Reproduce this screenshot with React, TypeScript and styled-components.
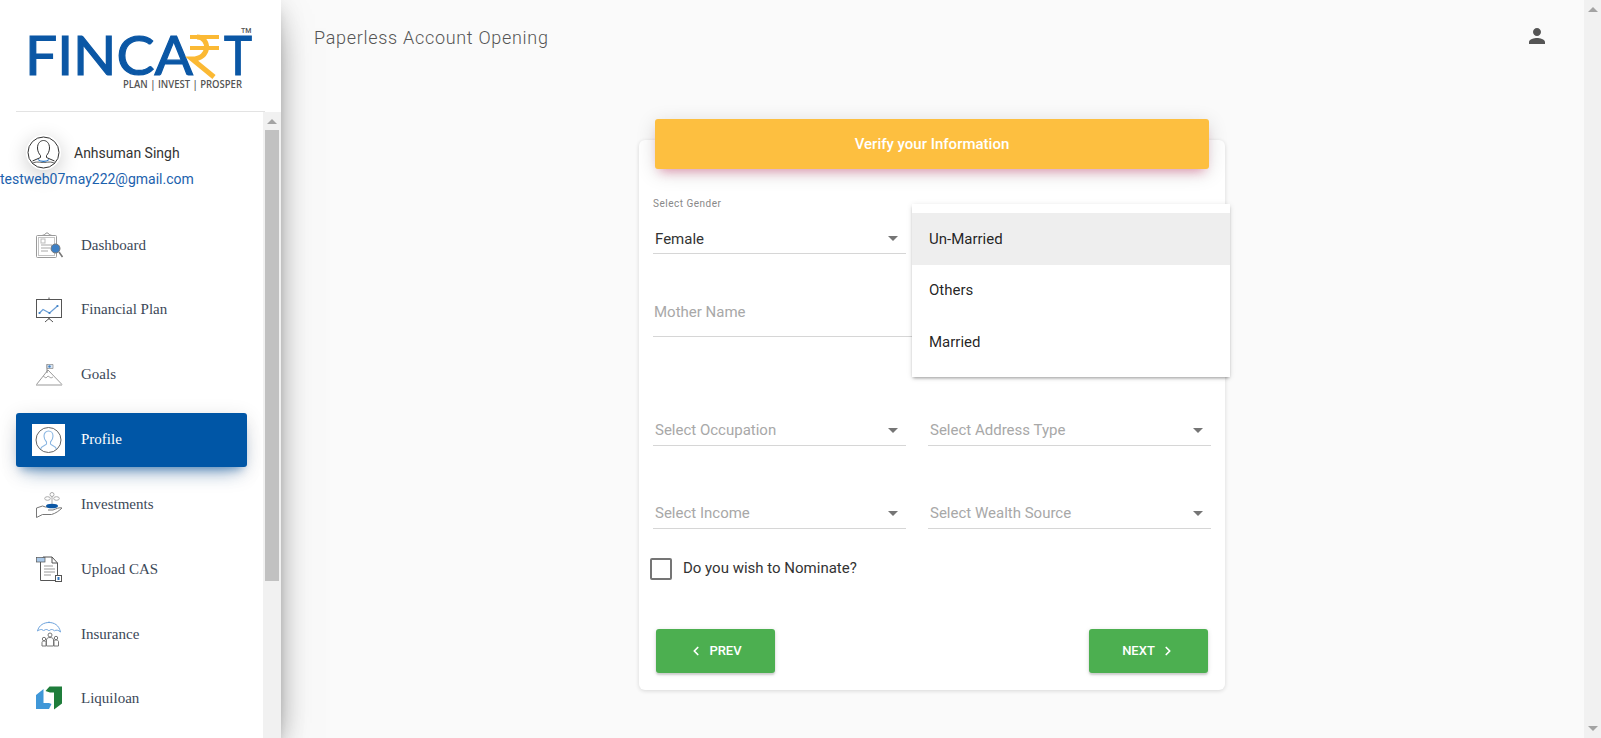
import React from 'react';
import styled, { createGlobalStyle } from 'styled-components';
import { MdPerson } from 'react-icons/md';
import { ChevronLeft, ChevronRight } from 'lucide-react';

const GlobalStyle = createGlobalStyle`
  html, body {
    margin: 0;
    padding: 0;
    height: 100%;
    overflow: hidden;
    background: #fafafa;
    font-family: Roboto, 'Liberation Sans', sans-serif;
  }
  #root { height: 100%; }
`;

const Page = styled.div`
  display: flex;
  height: 738px;
  overflow: hidden;
  background: #fafafa;
`;

const Sidebar = styled.aside`
  width: 281px;
  flex: none;
  display: flex;
  flex-direction: column;
  background: #fff;
  position: relative;
  z-index: 2;
  box-shadow: 0 16px 38px -12px rgba(0, 0, 0, 0.56), 0 4px 25px 0 rgba(0, 0, 0, 0.12),
    0 8px 10px -5px rgba(0, 0, 0, 0.2);
`;

const LogoBox = styled.div`
  height: 112px;
  margin: 0 16px;
  flex: none;
  border-bottom: 1px solid #e3e3e3;
  box-sizing: border-box;
  svg {
    display: block;
    margin-left: -16px;
  }
`;

const SideBody = styled.div`
  flex: 1;
  display: flex;
  min-height: 0;
`;

const SideContent = styled.div`
  flex: 1;
  min-width: 0;
  overflow: hidden;
  padding-top: 23px;
`;

const Track = styled.div<{ $width: number; $split?: boolean }>`
  width: ${(p) => p.$width}px;
  flex: none;
  background: #f1f1f1;
  display: flex;
  flex-direction: column;
  align-items: center;
  justify-content: ${(p) => (p.$split ? 'space-between' : 'flex-start')};
  padding-top: 7px;
  box-sizing: border-box;
`;

const ArrowUp = styled.span`
  width: 0;
  height: 0;
  flex: none;
  border-left: 5px solid transparent;
  border-right: 5px solid transparent;
  border-bottom: 5px solid #a3a3a3;
`;

const ArrowDown = styled.span`
  width: 0;
  height: 0;
  flex: none;
  margin-bottom: 7px;
  border-left: 5px solid transparent;
  border-right: 5px solid transparent;
  border-top: 5px solid #a3a3a3;
`;

const Thumb = styled.div`
  width: 14px;
  height: 451px;
  margin-top: 6px;
  background: #c1c1c1;
  flex: none;
`;

const UserRow = styled.div`
  display: flex;
  align-items: center;
  padding-left: 26px;
  gap: 13px;
`;

const Avatar = styled.div`
  width: 35px;
  height: 35px;
  border-radius: 50%;
  background: #fff;
  flex: none;
  box-shadow: 0 5px 20px rgba(0, 0, 0, 0.2);
  svg {
    display: block;
  }
`;

const UserName = styled.span`
  font-size: 14px;
  color: #333;
`;

const UserEmail = styled.div`
  font-size: 14px;
  line-height: 20px;
  margin-top: -1px;
  color: #1b61ad;
  white-space: nowrap;
`;

const NavList = styled.nav`
  display: flex;
  flex-direction: column;
  gap: 10.85px;
  margin: 29px 0 0 16px;
  width: 231px;
`;

const NavItem = styled.div<{ $active?: boolean }>`
  height: 54px;
  flex: none;
  display: flex;
  align-items: center;
  gap: 16px;
  padding-left: 16px;
  border-radius: 3px;
  font-family: 'Liberation Serif', 'Times New Roman', serif;
  font-size: 15px;
  color: ${(p) => (p.$active ? '#fff' : '#3c4858')};
  background: ${(p) => (p.$active ? '#0056a6' : 'transparent')};
  box-shadow: ${(p) =>
    p.$active
      ? '0 12px 20px -10px rgba(0,86,166,.5), 0 4px 20px 0 rgba(0,0,0,.12), 0 7px 8px -5px rgba(0,86,166,.4)'
      : 'none'};
`;

const IconBox = styled.span<{ $active?: boolean }>`
  width: 33px;
  height: 32px;
  flex: none;
  background: ${(p) => (p.$active ? '#fff' : 'transparent')};
  svg {
    display: block;
  }
`;

const Main = styled.main`
  flex: 1;
  min-width: 0;
  display: flex;
  flex-direction: column;
`;

const Header = styled.header`
  height: 74px;
  flex: none;
  display: flex;
  align-items: center;
  justify-content: space-between;
  padding: 0 35px 0 33px;
  color: #555;
  svg {
    margin-bottom: 2px;
  }
`;

const Title = styled.div`
  font-size: 18px;
  font-weight: 300;
  letter-spacing: 0.7px;
  color: #555;
`;

const Content = styled.div`
  flex: 1;
  display: flex;
  justify-content: center;
  padding: 66px 1px 0 0;
`;

const Card = styled.section`
  width: 586px;
  height: 550px;
  background: #fff;
  border-radius: 6px;
  box-shadow: 0 1px 4px 0 rgba(0, 0, 0, 0.14);
  display: flex;
  flex-direction: column;
`;

const CardHead = styled.div`
  margin: -21px 16px 0;
  height: 50px;
  flex: none;
  border-radius: 3px;
  background: #fdbf40;
  color: #fff;
  font-size: 15px;
  font-weight: 500;
  display: flex;
  align-items: center;
  justify-content: center;
  box-shadow: 0 4px 20px 0 rgba(0, 0, 0, 0.14), 0 7px 10px -5px rgba(233, 30, 99, 0.4);
`;

const FormGrid = styled.div`
  display: grid;
  grid-template-columns: 253px 283px;
  grid-template-rows: 58px 83px 109px 83px;
  column-gap: 22px;
  align-items: end;
  margin: 27px 14px 0;
`;

const FieldLabel = styled.div`
  font-size: 10px;
  line-height: 12px;
  letter-spacing: 0.5px;
  color: #888;
  margin-bottom: 13px;
`;

const SelectBox = styled.div<{ $empty?: boolean }>`
  height: 31px;
  box-sizing: border-box;
  border-bottom: 1px solid #d6d6d6;
  display: flex;
  align-items: center;
  justify-content: space-between;
  padding: ${(p) => (p.$empty ? '0' : '1px')} 8px 0 2px;
  font-size: 15px;
  color: ${(p) => (p.$empty ? '#a8a8a8' : '#333')};
`;

const Caret = styled.span`
  width: 0;
  height: 0;
  border-left: 5px solid transparent;
  border-right: 5px solid transparent;
  border-top: 5px solid #757575;
`;

const TextField = styled.div`
  grid-column: 1 / span 2;
  height: 50px;
  box-sizing: border-box;
  border-bottom: 1px solid #d6d6d6;
  display: flex;
  align-items: center;
  padding-left: 1px;
  font-size: 15px;
  color: #a8a8a8;
`;

const MenuAnchor = styled.div`
  position: relative;
  align-self: stretch;
`;

const Menu = styled.ul`
  position: absolute;
  left: -16px;
  top: 8px;
  width: 318px;
  height: 173px;
  margin: 0;
  padding: 9px 0 0;
  box-sizing: border-box;
  list-style: none;
  background: #fff;
  z-index: 5;
  box-shadow: 0 2px 3px -1px rgba(0, 0, 0, 0.35), 0 1px 6px 0 rgba(0, 0, 0, 0.1);
`;

const MenuItem = styled.li<{ $selected?: boolean }>`
  height: 51.5px;
  display: flex;
  align-items: center;
  padding-left: 17px;
  font-size: 15px;
  color: rgba(0, 0, 0, 0.87);
  background: ${(p) => (p.$selected ? '#eee' : 'transparent')};
`;

const CheckRow = styled.label`
  display: flex;
  align-items: center;
  gap: 11px;
  margin: 29px 0 0 11px;
  font-size: 15px;
  color: #333;
`;

const CheckBox = styled.span`
  width: 22px;
  height: 22px;
  flex: none;
  box-sizing: border-box;
  border: 2px solid #757575;
  border-radius: 2px;
`;

const CheckText = styled.span`
  margin-bottom: 2px;
`;

const ButtonRow = styled.div`
  display: flex;
  justify-content: space-between;
  margin: 49px 17px 0;
`;

const NavButton = styled.button`
  width: 119px;
  height: 44px;
  border: 0;
  padding: 0 0 1px;
  border-radius: 3px;
  background: #4caf50;
  color: #fff;
  font-family: inherit;
  font-size: 13px;
  font-weight: 500;
  display: flex;
  align-items: center;
  justify-content: center;
  gap: 6px;
  box-shadow: 0 2px 2px 0 rgba(0, 0, 0, 0.14), 0 1px 5px 0 rgba(0, 0, 0, 0.12);
`;

const Logo = () => (
  <svg width="265" height="109" viewBox="0 0 265 109">
    <text x="25" y="75" fontFamily="Lato, sans-serif" fontWeight="400" fontSize="54" fill="#0b57a5" stroke="#0b57a5" strokeWidth="1.200" textLength="168" lengthAdjust="spacingAndGlyphs">
      FINCA
    </text>
    <path d="M190 37h29M190 48h29" stroke="#fbb934" strokeWidth="4" fill="none" />
    <path d="M197 37c13 0 14 22-5 22l22 18" stroke="#fbb934" strokeWidth="5" fill="none" />
    <text x="224" y="75" fontFamily="Lato, sans-serif" fontWeight="400" fontSize="54" fill="#0b57a5" stroke="#0b57a5" strokeWidth="1.200" textLength="28" lengthAdjust="spacingAndGlyphs">
      T
    </text>
    <text x="241" y="33" fontFamily="Roboto, sans-serif" fontWeight="500" fontSize="7" fill="#555">
      TM
    </text>
    <text x="123" y="88" fontFamily="'Open Sans', sans-serif" fontWeight="600" fontSize="10.5" fill="#555" textLength="119" lengthAdjust="spacingAndGlyphs">
      PLAN | INVEST | PROSPER
    </text>
  </svg>
);

const AvatarIcon = () => (
  <svg width="35" height="35" viewBox="0 0 35 35" fill="none">
    <circle cx="17.5" cy="17.5" r="15.5" stroke="#333" strokeWidth="1" />
    <path d="M11.5 13c0-5 3-7.500 6-7.500s6 2.500 6 7.500c0 3-1.500 6-3 7.500v2l8 3.500M11.500 13c0 3 1.500 6 3 7.500v2l-8 3.500" stroke="#333" strokeWidth="1" />
    <path d="M12 24.500c2 2.500 9 2.500 11 0" stroke="#1b6fc4" strokeWidth="1.200" />
    <path d="M6 28.500c4-2.500 8-1 11.500-1s7.500-1.500 11.500 1" stroke="#333" strokeWidth="0.800" />
  </svg>
);

const DashboardIcon = () => (
  <svg width="33" height="32" viewBox="0 0 33 32" fill="none">
    <rect x="4.500" y="6.500" width="20" height="22" rx="1" stroke="#9a9a9a" />
    <rect x="6.500" y="8.500" width="16" height="18" stroke="#c4c4c4" />
    <path d="M10 6.500l3-1 1-1.500h2l1 1.500 3 1" stroke="#9a9a9a" />
    <path d="M9 16h11M9 19h9M9 22h7" stroke="#a8a8a8" strokeWidth="1.200" />
    <rect x="9" y="10" width="4" height="4" stroke="#bbb" />
    <circle cx="23.500" cy="19.500" r="4.500" fill="#3d7fc4" stroke="#777" />
    <path d="M27 23l3.500 5" stroke="#777" strokeWidth="1.600" />
  </svg>
);

const PlanIcon = () => (
  <svg width="33" height="32" viewBox="0 0 33 32" fill="none">
    <rect x="4.500" y="5.500" width="25" height="18" stroke="#555" />
    <path d="M17 3.500v2M17 23.500v2M13 28l4-3.500 4 3.500" stroke="#555" />
    <path d="M7.500 19l3.500-3.500 6.500 3.500 8-7" stroke="#6c9fd6" strokeWidth="1.200" />
    <circle cx="7.500" cy="19" r="1.100" fill="#3d7fc4" />
    <circle cx="17.500" cy="19" r="1.100" fill="#3d7fc4" />
    <circle cx="25.500" cy="12" r="1.100" fill="#3d7fc4" />
  </svg>
);

const GoalsIcon = () => (
  <svg width="33" height="32" viewBox="0 0 33 32" fill="none">
    <path d="M4.500 25.500L16 11l14 14.500" stroke="#9a9a9a" />
    <path d="M4 26h26" stroke="#aaa" strokeWidth="1.200" />
    <path d="M11 17l3 2 2-2 3 2 2-1" stroke="#aaa" />
    <path d="M15 5v9" stroke="#888" />
    <path d="M15 5.500h6v4h-6z" fill="#dce7f4" stroke="#888" strokeWidth="0.700" />
    <circle cx="17.500" cy="7.500" r="1.200" fill="#3d7fc4" />
  </svg>
);

const ProfileIcon = () => (
  <svg width="33" height="32" viewBox="0 0 33 32" fill="none">
    <circle cx="16.500" cy="16" r="12.500" stroke="#666" />
    <path d="M8.500 25c1-3 5-3.500 6-5v-2c-1.500-1.500-2.500-3-2.500-6 0-3 2-5 4.500-5s4.500 2 4.500 5c0 3-1 4.500-2.500 6v2c1 1.500 5 2 6 5" stroke="#8ab6e2" strokeWidth="1.100" />
  </svg>
);

const InvestIcon = () => (
  <svg width="33" height="32" viewBox="0 0 33 32" fill="none">
    <path d="M4.500 20v9.500l6-3h9c4-1 8-4 10.500-6.500-3-1-6 1-9 2h-5" stroke="#777" />
    <path d="M4.500 20l6-2 3 1h6" stroke="#777" />
    <ellipse cx="20" cy="18" rx="6" ry="2.300" fill="#0b57a5" />
    <path d="M20 16V8" stroke="#aaa" />
    <circle cx="20" cy="6.500" r="2" stroke="#aaa" />
    <ellipse cx="15.500" cy="10.500" rx="2.800" ry="1.800" stroke="#aaa" />
    <ellipse cx="24.500" cy="10.500" rx="2.800" ry="1.800" stroke="#aaa" />
  </svg>
);

const UploadIcon = () => (
  <svg width="33" height="32" viewBox="0 0 33 32" fill="none">
    <path d="M8.500 8V27.500h17V10l-5.500-6H11v2" stroke="#555" />
    <path d="M20 4v6h5.500" stroke="#555" />
    <rect x="4.500" y="4.500" width="8.500" height="4.500" fill="#a9c8e8" stroke="#555" strokeWidth="0.700" />
    <path d="M12 13h9M12 16h11M12 19h11M12 22h7" stroke="#999" />
    <rect x="23.500" y="22.500" width="6" height="6" fill="#fff" stroke="#555" />
    <rect x="25.500" y="24" width="2" height="3" fill="#2f74bd" />
  </svg>
);

const InsuranceIcon = () => (
  <svg width="33" height="32" viewBox="0 0 33 32" fill="none">
    <path d="M5.500 13C7 7 12 4.500 17 4.500S27 7 28.500 14" stroke="#6ea3dc" />
    <path d="M5.500 13c3-2 5-2 6 0 1.500-2 4-2 5.500 0 1.500-2 4-2 5.500 0 1.500-1.500 4-1 6 1" stroke="#6ea3dc" />
    <path d="M17 5V3.500" stroke="#6ea3dc" />
    <circle cx="18" cy="17" r="2" stroke="#777" />
    <path d="M14.500 28v-6c0-1.500 1-2.500 3.500-2.500s3.500 1 3.500 2.500v6z" stroke="#777" />
    <circle cx="12" cy="21" r="1.700" stroke="#777" />
    <path d="M10 28v-3.500c0-1 .8-1.500 2-1.500s2 .5 2 1.500V28z" stroke="#777" />
    <circle cx="24" cy="20" r="1.700" stroke="#777" />
    <path d="M22 28v-4.500c0-1 .8-1.500 2-1.500s2.500 .5 2.500 1.500V28z" stroke="#777" />
  </svg>
);

const LiquiloanIcon = () => (
  <svg width="33" height="32" viewBox="0 0 33 32">
    <path d="M13.500 8l4-4.500H30v17l-8 6V9.500h-4z" fill="#1f7d3b" />
    <path d="M4 12l7.500-6v14h5.500l2.500 1-2.500 5H4z" fill="#3f97d8" />
  </svg>
);

const navItems = [
  { label: 'Dashboard', Icon: DashboardIcon },
  { label: 'Financial Plan', Icon: PlanIcon },
  { label: 'Goals', Icon: GoalsIcon },
  { label: 'Profile', Icon: ProfileIcon, active: true },
  { label: 'Investments', Icon: InvestIcon },
  { label: 'Upload CAS', Icon: UploadIcon },
  { label: 'Insurance', Icon: InsuranceIcon },
  { label: 'Liquiloan', Icon: LiquiloanIcon },
];

const Select: React.FC<{ value: string; empty?: boolean }> = ({ value, empty }) => (
  <SelectBox $empty={empty}>
    {value}
    <Caret />
  </SelectBox>
);

export default function App() {
  return (
    <Page>
      <GlobalStyle />
      <Sidebar>
        <LogoBox>
          <Logo />
        </LogoBox>
        <SideBody>
          <SideContent>
            <UserRow>
              <Avatar>
                <AvatarIcon />
              </Avatar>
              <UserName>Anhsuman Singh</UserName>
            </UserRow>
            <UserEmail>testweb07may222@gmail.com</UserEmail>
            <NavList>
              {navItems.map(({ label, Icon, active }) => (
                <NavItem key={label} $active={active}>
                  <IconBox $active={active}>
                    <Icon />
                  </IconBox>
                  {label}
                </NavItem>
              ))}
            </NavList>
          </SideContent>
          <Track $width={18}>
            <ArrowUp />
            <Thumb />
          </Track>
        </SideBody>
      </Sidebar>
      <Main>
        <Header>
          <Title>Paperless Account Opening</Title>
          <MdPerson size={24} color="#555" />
        </Header>
        <Content>
          <Card>
            <CardHead>Verify your Information</CardHead>
            <FormGrid>
              <div>
                <FieldLabel>Select Gender</FieldLabel>
                <Select value="Female" />
              </div>
              <MenuAnchor>
                <Menu>
                  <MenuItem $selected>Un-Married</MenuItem>
                  <MenuItem>Others</MenuItem>
                  <MenuItem>Married</MenuItem>
                </Menu>
              </MenuAnchor>
              <TextField>Mother Name</TextField>
              <Select value="Select Occupation" empty />
              <Select value="Select Address Type" empty />
              <Select value="Select Income" empty />
              <Select value="Select Wealth Source" empty />
            </FormGrid>
            <CheckRow>
              <CheckBox />
              <CheckText>Do you wish to Nominate?</CheckText>
            </CheckRow>
            <ButtonRow>
              <NavButton>
                <ChevronLeft size={14} strokeWidth={3} />
                PREV
              </NavButton>
              <NavButton>
                NEXT
                <ChevronRight size={14} strokeWidth={3} />
              </NavButton>
            </ButtonRow>
          </Card>
        </Content>
      </Main>
      <Track $width={17} $split>
        <ArrowUp />
        <ArrowDown />
      </Track>
    </Page>
  );
}
